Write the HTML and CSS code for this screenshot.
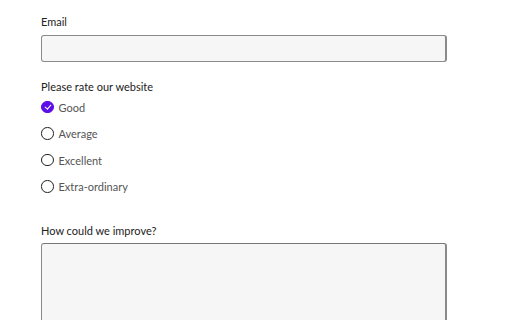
FILE: index.html
```html
<!DOCTYPE html>
<html lang="en">
<head>
    <meta charset="UTF-8">
    <title>Feedback</title>
    <link rel="stylesheet" href="styles.css">
</head>
<body>
    <form class="feedback">
        <div class="field">
            <label class="field-label" for="email">Email</label>
            <input class="text-input" id="email" type="email">
        </div>

        <div class="field field-radios">
            <div class="field-label">Please rate our website</div>
            <div class="radio-list">
                <label class="radio-row"><input type="radio" name="rate" checked><span class="radio-mark"></span><span class="radio-text">Good</span></label>
                <label class="radio-row"><input type="radio" name="rate"><span class="radio-mark"></span><span class="radio-text">Average</span></label>
                <label class="radio-row"><input type="radio" name="rate"><span class="radio-mark"></span><span class="radio-text">Excellent</span></label>
                <label class="radio-row"><input type="radio" name="rate"><span class="radio-mark"></span><span class="radio-text">Extra-ordinary</span></label>
            </div>
        </div>

        <div class="field">
            <label class="field-label label-tight" for="improve">How could we improve?</label>
            <textarea class="text-area" id="improve"></textarea>
        </div>
    </form>
</body>
</html>
```

FILE: styles.css
```css
body {
    margin: 0;
    font-family: Lato, 'Open Sans', sans-serif;
    font-size: 11px;
    color: #222;
    background: #fff;
    overflow: hidden;
}
.feedback {
    padding: 15px 0 0 41px;
    width: 406px;
}
.field {
    display: flex;
    flex-direction: column;
    margin-bottom: 18px;
}
.field-radios {
    margin-bottom: 30px;
}
.field-label {
    line-height: 14px;
    margin-bottom: 6px;
}
.label-tight {
    margin-bottom: 5px;
}
.text-input,
.text-area {
    box-sizing: border-box;
    width: 406px;
    background: #f6f6f6;
    border: 1px solid #8a8a8a;
    border-right-width: 2px;
    border-radius: 3px;
    margin: 0;
    font: inherit;
}
.text-input {
    height: 27px;
}
.text-area {
    height: 120px;
    border-top-color: #777;
    resize: none;
}
.radio-list {
    display: flex;
    flex-direction: column;
    gap: 12.5px;
}
.radio-row {
    display: flex;
    align-items: center;
    gap: 5px;
    height: 14px;
}
.radio-row input {
    display: none;
}
.radio-mark {
    box-sizing: border-box;
    width: 12.5px;
    height: 12.5px;
    border: 1px solid #222;
    border-radius: 50%;
    position: relative;
}
.radio-row input:checked + .radio-mark {
    background: #5b0ee8;
    border-color: #5b0ee8;
}
.radio-row input:checked + .radio-mark::after {
    content: '';
    position: absolute;
    left: 3.7px;
    top: 1.6px;
    width: 2.5px;
    height: 5px;
    border: solid #fff;
    border-width: 0 1.5px 1.5px 0;
    transform: rotate(40deg);
}
.radio-text {
    color: #555;
}
```
